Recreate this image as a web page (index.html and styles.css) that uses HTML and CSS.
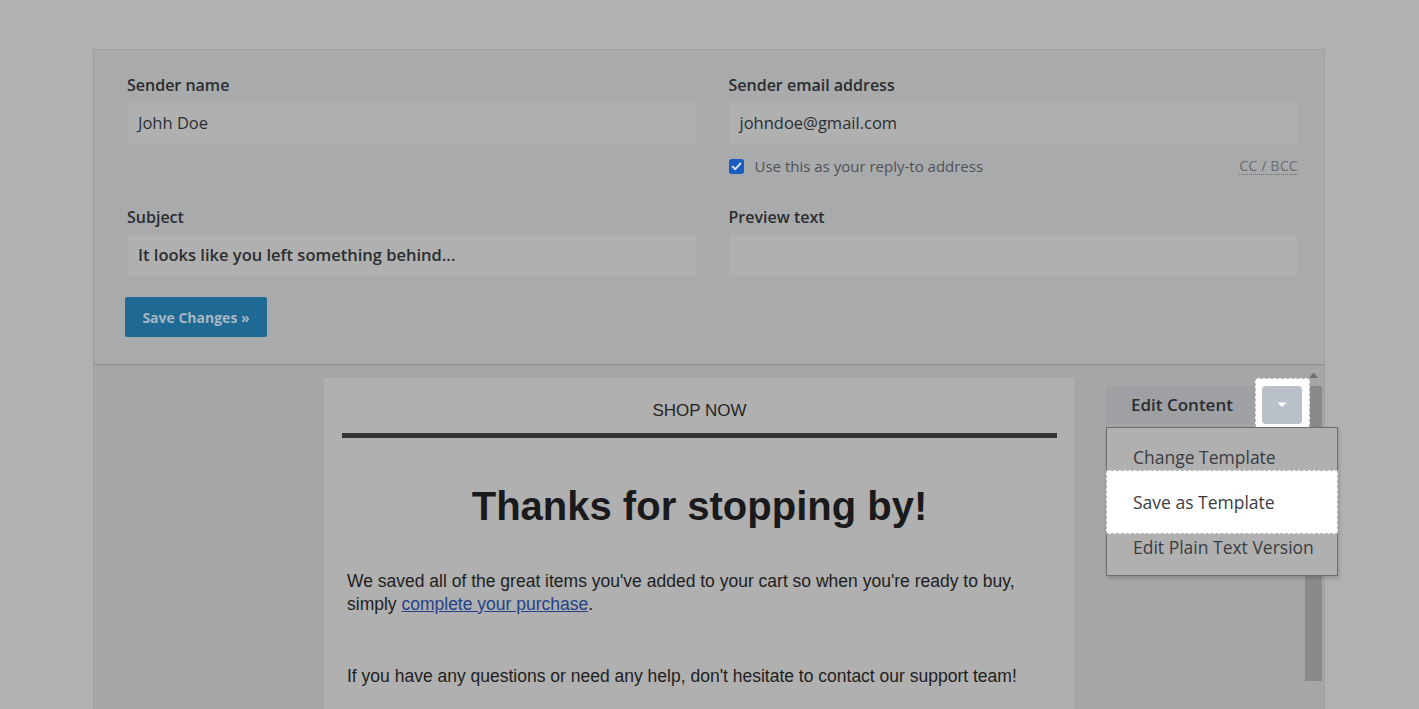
FILE: index.html
```html
<!DOCTYPE html>
<html lang="en">
<head>
<meta charset="utf-8">
<title>Campaign editor</title>
<link rel="stylesheet" href="styles.css">
</head>
<body>
<div class="panel">
  <section class="settings">
    <div class="grid">
      <div class="field">
        <label class="label">Sender name</label>
        <div class="input">Johh Doe</div>
      </div>
      <div class="field">
        <label class="label">Sender email address</label>
        <div class="input">johndoe@gmail.com</div>
        <div class="reply-row">
          <span class="check"><svg width="15" height="15" viewBox="0 0 15 15"><rect x="0" y="0" width="15" height="15" rx="2.5" fill="#1b5ec0"/><path d="M3.6 7.6 L6.2 10.1 L11.4 4.6" fill="none" stroke="#dfe6ee" stroke-width="2" stroke-linecap="round" stroke-linejoin="round"/></svg></span>
          <span class="reply-text">Use this as your reply-to address</span>
          <span class="ccbcc">CC / BCC</span>
        </div>
      </div>
      <div class="field">
        <label class="label">Subject</label>
        <div class="input strong">It looks like you left something behind...</div>
      </div>
      <div class="field">
        <label class="label">Preview text</label>
        <div class="input"></div>
      </div>
    </div>
    <button class="save">Save Changes »</button>
  </section>
  <section class="editor">
    <div class="spacer"></div>
    <div class="email">
      <div class="shop">SHOP NOW</div>
      <div class="bar"></div>
      <h1 class="headline">Thanks for stopping by!</h1>
      <p class="para">We saved all of the great items you've added to your cart so when you're ready to buy, simply <a class="link" href="#">complete your purchase</a>.</p>
      <p class="para second">If you have any questions or need any help, don't hesitate to contact our support team!</p>
    </div>
    <div class="side">
      <div class="btn-group">
        <span class="edit-label">Edit Content</span>
        <span class="toggle-wrap"><span class="toggle"><svg width="10" height="6" viewBox="0 0 10 6"><path d="M0.5 0.5 L9.5 0.5 L5 5 Z" fill="#ffffff"/></svg></span></span>
        <div class="menu">
          <div class="item first">Change Template</div>
          <div class="item active">Save as Template</div>
          <div class="item last">Edit Plain Text Version</div>
        </div>
      </div>
    </div>
    <div class="scroll">
      <svg class="arrow" width="9" height="6" viewBox="0 0 9 6"><path d="M0 6 L4.5 0.5 L9 6 Z" fill="#6f6f6f"/></svg>
      <div class="thumb"></div>
    </div>
  </section>
</div>
</body>
</html>
```
FILE: styles.css
```css
html, body {
  margin: 0;
  padding: 0;
  height: 100%;
  overflow: hidden;
}
body {
  background: #b1b1b1;
  font-family: "Open Sans", "Lato", sans-serif;
  color: #2a2c2f;
}
.panel {
  margin: 49px 0 0 93px;
  width: 1230px;
  border: 1px solid #a0a1a2;
  border-bottom: none;
  background: #a6a6a6;
}
.settings {
  background: #a9aaac;
  padding: 25px 26px 27px 33px;
  border-bottom: 1px solid #8e8f93;
}
.grid {
  display: grid;
  grid-template-columns: 1fr 1fr;
  column-gap: 32px;
  row-gap: 28px;
}
.field {
  display: flex;
  flex-direction: column;
}
.label {
  font-size: 16px;
  line-height: 20px;
  font-weight: 600;
  color: #2b2d30;
  margin-bottom: 7px;
}
.input {
  box-sizing: border-box;
  height: 43px;
  background: #b0b0b0;
  border: 1px solid #acacad;
  border-radius: 2px;
  padding: 0 10px 1px;
  font-size: 16.5px;
  line-height: 40px;
  color: #2b2e31;
}
.input.strong {
  font-weight: 600;
}
.reply-row {
  display: flex;
  align-items: center;
  height: 26px;
  margin-top: 8px;
  font-size: 15px;
}
.check {
  display: flex;
  width: 15px;
  height: 15px;
  margin-right: 11px;
}
.reply-text {
  color: #4f5358;
}
.ccbcc {
  margin-left: auto;
  color: #6a6e73;
  font-size: 14.5px;
  border-bottom: 1px dotted #6a6e73;
  line-height: 17px;
}
.save {
  display: block;
  margin: 20px 0 0 -2px;
  width: 142px;
  height: 40px;
  border: none;
  border-radius: 2px;
  background: #1f6a94;
  color: #a9b6c2;
  font-family: "Open Sans", sans-serif;
  font-weight: 700;
  font-size: 14px;
  padding: 0;
}
.editor {
  display: flex;
  align-items: flex-start;
  padding-top: 13px;
  height: 400px;
}
.spacer {
  width: 230px;
  flex: none;
}
.email {
  width: 750px;
  flex: none;
  background: #b0b0b0;
  align-self: stretch;
  box-sizing: border-box;
  padding: 21px 17px 0 18px;
  font-family: "Liberation Sans", Arial, sans-serif;
  color: #1c1c1c;
}
.shop {
  text-align: center;
  font-size: 17px;
  line-height: 24px;
  color: #262626;
}
.bar {
  height: 5px;
  background: #333333;
  margin-top: 10px;
}
.headline {
  margin: 44px 0 0;
  text-align: center;
  font-size: 40px;
  line-height: 48px;
  font-weight: 700;
  color: #1a1a1c;
}
.para {
  margin: 40px 0 0;
  padding: 0 12px 0 5px;
  font-size: 17.5px;
  line-height: 23px;
  color: #1e1e1e;
}
.para.second {
  margin-top: 49px;
}
.link {
  color: #24418a;
  text-decoration: underline;
}
.side {
  margin-left: 32px;
  margin-top: 8px;
  width: 196px;
  flex: none;
}
.btn-group {
  position: relative;
  display: flex;
  align-items: center;
  height: 38px;
  background: #9fa0a4;
  border-radius: 4px;
}
.edit-label {
  padding-left: 25px;
  padding-bottom: 2px;
  font-size: 17px;
  font-weight: 600;
  color: #2a2c30;
  flex: 1;
}
.toggle-wrap {
  position: relative;
  z-index: 1;
  display: flex;
  width: 40px;
  height: 38px;
}
.toggle-wrap::before {
  content: "";
  position: absolute;
  left: -7px;
  top: -8px;
  right: -8px;
  bottom: -8px;
  background: #ffffff;
  border: 1px dashed #b8b8b8;
  z-index: -1;
}
.toggle {
  display: flex;
  align-items: center;
  justify-content: center;
  width: 40px;
  height: 38px;
  background: #b9c0c8;
  border-radius: 4px;
}
.menu {
  position: absolute;
  top: 41px;
  left: 0;
  width: 232px;
  box-sizing: border-box;
  background: #b0b0b0;
  border: 1px solid #6b6d71;
  box-shadow: 1px 2px 4px rgba(0,0,0,0.18);
  z-index: 2;
  font-size: 17.5px;
  color: #3a3d42;
}
.item {
  padding: 0 0 0 26px;
  line-height: 22px;
}
.item.first {
  padding-top: 18px;
  height: 24px;
}
.item.active {
  margin: 0 -1px;
  padding-left: 26px;
  height: 64px;
  line-height: 62px;
  box-sizing: border-box;
  background: #ffffff;
  border: 1px dashed #b3b3b3;
  color: #3a3d42;
}
.item.last {
  padding-top: 2px;
  padding-bottom: 17px;
}
.scroll {
  margin-left: 3px;
  width: 17px;
  flex: none;
  display: flex;
  flex-direction: column;
  align-items: center;
  margin-top: -6px;
}
.arrow {
  display: block;
}
.thumb {
  margin-top: 8px;
  width: 17px;
  height: 295px;
  background: #8a8a8a;
}
```
